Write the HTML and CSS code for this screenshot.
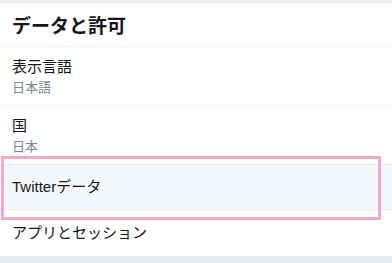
FILE: index.html
```html
<!DOCTYPE html>
<html lang="ja">
<head>
<meta charset="utf-8">
<link rel="stylesheet" href="styles.css">
</head>
<body>
<div class="panel">
  <div class="header">データと許可</div>
  <div class="row two">
    <div class="primary">表示言語</div>
    <div class="secondary">日本語</div>
  </div>
  <div class="row two">
    <div class="primary">国</div>
    <div class="secondary">日本</div>
  </div>
  <div class="row one active">
    <div class="primary">Twitterデータ</div>
    <div class="highlight-box"></div>
  </div>
  <div class="row one last">
    <div class="primary">アプリとセッション</div>
  </div>
</div>
</body>
</html>
```
FILE: styles.css
```css
html, body {
  margin: 0;
  padding: 0;
}
body {
  background: #e6ecf0;
  width: 392px;
  height: 263px;
  overflow: hidden;
  font-family: "Liberation Sans", "Noto Sans CJK JP", sans-serif;
  color: #14171a;
}
.panel {
  margin-top: 3px;
  background: #ffffff;
  height: 253px;
}
.header {
  height: 44px;
  box-sizing: border-box;
  border-bottom: 1px solid #e6ecf0;
  display: flex;
  align-items: center;
  padding-left: 12px;
  font-size: 19px;
  font-weight: bold;
}
.row {
  position: relative;
  padding-left: 12px;
  border-bottom: 1px solid #e6ecf0;
}
.row.two {
  padding-top: 10px;
  height: 48px;
}
.row.one {
  height: 44px;
  display: flex;
  align-items: center;
}
.row.last {
  border-bottom: none;
  height: 45px;
}
.row.active {
  background: #f5f8fa;
  border-top: 1px solid #e6ecf0;
  margin-top: -1px;
}
.primary {
  font-size: 15px;
  line-height: 20px;
}
.secondary {
  font-size: 13px;
  line-height: 18px;
  margin-top: 2px;
  color: #7a8b98;
}
.highlight-box {
  position: absolute;
  left: 1px;
  right: 11px;
  top: -9px;
  bottom: -11px;
  border: 3px solid #f3aac8;
}
```
